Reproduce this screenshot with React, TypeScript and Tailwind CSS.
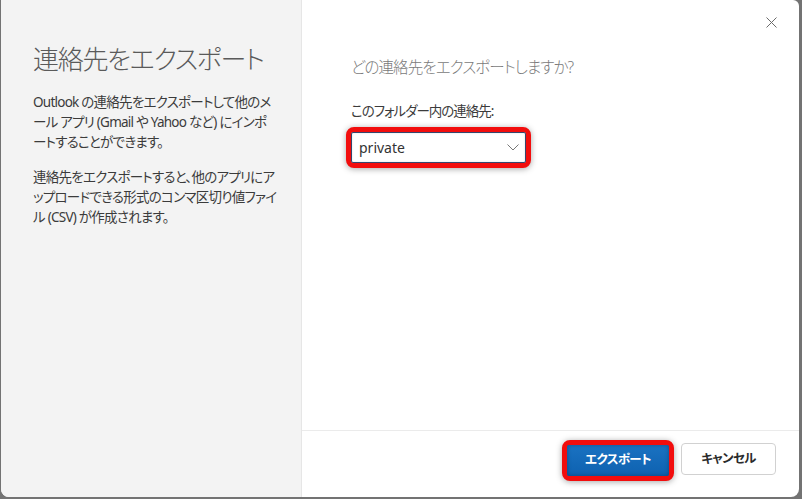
import React from "react";

const jp = {
  fontFamily: '"Noto Sans", "Noto Sans CJK JP", sans-serif',
};

export default function App() {
  return (
    <div
      className="w-[802px] h-[499px] bg-[#737373] overflow-hidden [font-feature-settings:'palt']"
      style={jp}
    >
      <div className="ml-[1px] w-[798px] h-[497px] flex rounded-b-[8px] rounded-tr-[6px] overflow-hidden bg-white">
        {/* description column */}
        <div className="w-[301px] shrink-0 bg-[#f3f3f3] border-r border-[#e6e6e6] pl-[32px] pr-[20px] pt-[40px]">
          <h1 className="text-[26px] leading-[38px] font-light text-[#5a5a5a] tracking-[-1.3px] whitespace-nowrap">
            連絡先をエクスポート
          </h1>
          <p className="mt-[14px] text-[13.5px] leading-[20px] text-[#3b3b3b] tracking-[-0.75px] whitespace-nowrap">
            Outlook の連絡先をエクスポートして他のメ
            <br />
            ール アプリ (Gmail や Yahoo など) にインポ
            <br />
            ートすることができます。
          </p>
          <p className="mt-[15px] text-[13.5px] leading-[20px] text-[#3b3b3b] tracking-[-0.75px] whitespace-nowrap">
            連絡先をエクスポートすると、他のアプリにア
            <br />
            ップロードできる形式のコンマ区切り値ファイ
            <br />
            ル (CSV) が作成されます。
          </p>
        </div>

        {/* form column */}
        <div className="flex-1 flex flex-col">
          <div className="flex-1 relative pl-[49px] pt-[55px]">
            <button className="absolute right-[20px] top-[14px] w-[16px] h-[16px] flex items-center justify-center text-[#6b6b6b]">
              <svg width="11" height="11" viewBox="0 0 11 11" fill="none" stroke="currentColor" strokeWidth="1">
                <path d="M0.5 0.5 L10.5 10.5 M10.5 0.5 L0.5 10.5" />
              </svg>
            </button>
            <h2 className="text-[15.5px] leading-[24px] text-[#7a7a7a] font-light tracking-[-0.9px] whitespace-nowrap">
              どの連絡先をエクスポートしますか?
            </h2>
            <div className="mt-[22px] text-[13.5px] leading-[20px] text-[#3b3b3b] tracking-[-1px] whitespace-nowrap">
              このフォルダー内の連絡先:
            </div>
            <div className="mt-[6px] ml-[-5px] w-[185px] h-[41px] rounded-[8px] border-[5px] border-[#f20d0d] shadow-[0_1px_6px_rgba(0,0,0,0.35)] bg-white">
              <div className="h-full flex items-center justify-between border border-[#34466e] rounded-[2px] pl-[7px] pr-[6px] shadow-[inset_0_0_2px_rgba(0,0,0,0.15)]">
                <span className="text-[14px] text-[#333]">private</span>
                <svg width="12" height="7" viewBox="0 0 12 7" fill="none" stroke="#777" strokeWidth="1">
                  <path d="M0.5 0.5 L6 6 L11.5 0.5" />
                </svg>
              </div>
            </div>
          </div>

          <div className="h-[67px] border-t border-[#ebebeb] flex items-start justify-end gap-[7px] pr-[23px] pt-[9px]">
            <div className="w-[112px] h-[41px] rounded-[8px] border-[5px] border-[#f20d0d] shadow-[0_1px_6px_rgba(0,0,0,0.35)] bg-[#0f6cbd]">
              <button className="w-full h-full rounded-[2px] bg-gradient-to-b from-[#1a72c2] to-[#0e62b0] text-white text-[12.5px] font-bold tracking-[-0.6px] shadow-[inset_0_0_4px_rgba(0,0,0,0.3)]">
                エクスポート
              </button>
            </div>
            <button className="mt-[3px] w-[95px] h-[32px] rounded-[4px] border border-[#d1d1d1] bg-white text-[#2b2b2b] text-[12.5px] font-bold tracking-[-0.6px]">
              キャンセル
            </button>
          </div>
        </div>
      </div>
    </div>
  );
}
